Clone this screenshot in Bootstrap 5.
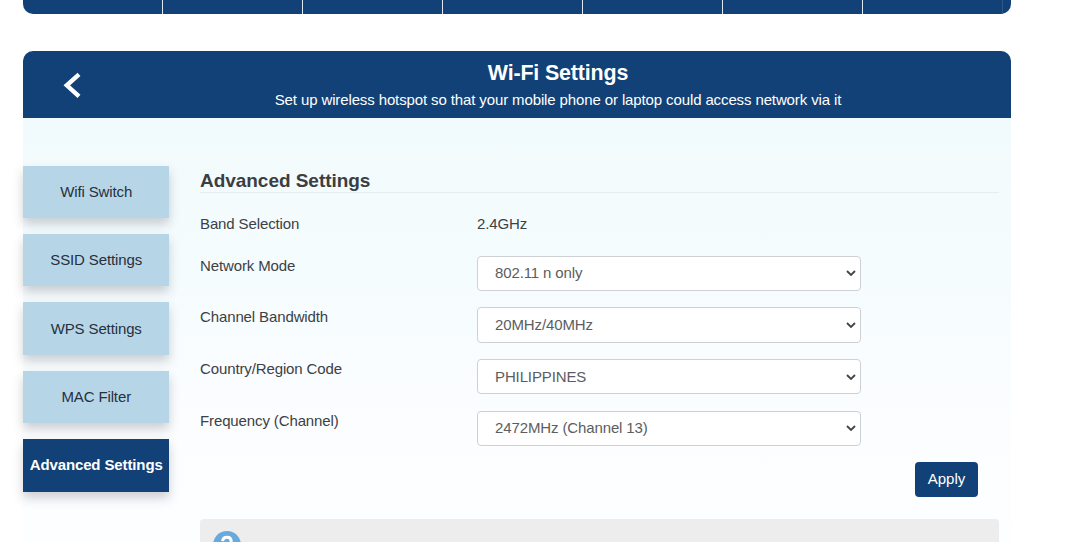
<!DOCTYPE html>
<html lang="en">
<head>
<meta charset="utf-8">
<meta name="viewport" content="width=device-width, initial-scale=1">
<title>Wi-Fi Settings</title>
<link href="https://cdn.jsdelivr.net/npm/bootstrap@5.3.0/dist/css/bootstrap.min.css" rel="stylesheet">
<style>
  :root { --navy: #114176; --sky: #b6d6e8; }
  body { font-family: "Liberation Sans", Arial, sans-serif; font-size: 15px; line-height: 20px; letter-spacing: -.12px; color: #3d4045; background: #fff; }
  .page { width: 988px; margin-left: 23px; height: 542px; }
  .topnav { height: 13.6px; background: var(--navy); border-radius: 0 0 10px 10px; padding-right: 8px; }
  .topnav span { border-right: 1px solid #dfe9f2; }
  .topnav span:last-child { border-color: #2c588a; }
  .panel { margin-top: 37.9px; height: 490.5px; }
  .panel-head { height: 67px; background: var(--navy); border-radius: 10px 10px 0 0; padding: 8.6px 0 0 82px; }
  .panel-head h1 { font-size: 21.4px; line-height: 26px; letter-spacing: -.14px; }
  .panel-head p { line-height: 20px; margin-top: 4px; }
  .back { left: 40px; top: 21px; line-height: 0; }
  .panel-main { background: linear-gradient(#f1fafc 0, #f5fcfe 150px, #fbfdff 300px, #fdfeff 424px); height: 423.5px; padding-top: 47.1px; }
  .side { width: 146px; padding-left: .4px; gap: 16px; }
  .side a { height: 52.4px; background: var(--sky); color: #27303c; box-shadow: 0 6px 10px rgba(60,60,70,.24); text-decoration: none; }
  .side a.current { background: var(--navy); color: #fff; font-weight: 700; }
  .content { margin-left: 31px; width: 799px; height: 376.4px; }
  .content h2 { height: 27.3px; padding-top: 1px; font-size: 19px; line-height: 27px; letter-spacing: -.04px; color: #3c3e42; border-bottom: 1px solid #e4edf0; }
  .form-line { height: 51.6px; }
  .form-line label { width: 277px; }
  .form-line.first { height: 62.9px; padding-top: 21.3px; }
  .form-line .form-select { width: 384.2px; height: 35.4px; font: inherit; letter-spacing: inherit; line-height: 20px; padding: 0 30px 0 17px; color: #5b5d61; border: 1px solid #cdd1d3; border-radius: 4px; background-color: #fff;
    background-image: url("data:image/svg+xml,%3Csvg xmlns='http://www.w3.org/2000/svg' viewBox='0 0 10 6'%3E%3Cpath d='M1 1l4 4 4-4' fill='none' stroke='%23444' stroke-width='1.8'/%3E%3C/svg%3E");
    background-size: 10px 6px; background-position: right 4px center; }
  .apply { width: 63px; height: 35px; background: var(--navy); color: #fff; border: 0; border-radius: 4px; font-size: 15px; line-height: 20px; padding: 0 0 2px; margin-right: 21px; letter-spacing: -.05px; }
  .help { height: 23px; background: #ededed; border-radius: 4px 4px 0 0; padding: 12px 13px 0; margin-top: 21.5px; }
</style>
</head>
<body class="overflow-hidden">
<div class="page">
  <nav class="topnav d-flex">
    <span class="flex-fill"></span><span class="flex-fill"></span><span class="flex-fill"></span><span class="flex-fill"></span><span class="flex-fill"></span><span class="flex-fill"></span><span class="flex-fill"></span>
  </nav>
  <section class="panel">
    <header class="panel-head position-relative text-center text-white">
      <a href="#" class="back position-absolute" aria-label="Back"><svg width="18" height="27" viewBox="0 0 18 27"><path d="M16 2.4 3.8 13.3 16 24.4" fill="none" stroke="#fff" stroke-width="4.4"/></svg></a>
      <h1 class="fw-bold mb-0">Wi-Fi Settings</h1>
      <p class="mb-0">Set up wireless hotspot so that your mobile phone or laptop could access network via it</p>
    </header>
    <div class="panel-main d-flex align-items-start">
      <nav class="side d-flex flex-column">
        <a href="#" class="d-flex align-items-center justify-content-center">Wifi Switch</a>
        <a href="#" class="d-flex align-items-center justify-content-center">SSID Settings</a>
        <a href="#" class="d-flex align-items-center justify-content-center">WPS Settings</a>
        <a href="#" class="d-flex align-items-center justify-content-center">MAC Filter</a>
        <a href="#" class="current d-flex align-items-center justify-content-center text-nowrap">Advanced Settings</a>
      </nav>
      <main class="content overflow-hidden">
        <h2 class="fw-bold mb-0">Advanced Settings</h2>
        <div class="form-line first d-flex"><label>Band Selection</label><span>2.4GHz</span></div>
        <div class="form-line d-flex"><label for="mode">Network Mode</label><select id="mode" class="form-select"><option>802.11 n only</option></select></div>
        <div class="form-line d-flex"><label for="width">Channel Bandwidth</label><select id="width" class="form-select"><option>20MHz/40MHz</option></select></div>
        <div class="form-line d-flex"><label for="region">Country/Region Code</label><select id="region" class="form-select"><option>PHILIPPINES</option></select></div>
        <div class="form-line d-flex"><label for="freq">Frequency (Channel)</label><select id="freq" class="form-select"><option>2472MHz (Channel 13)</option></select></div>
        <div class="d-flex justify-content-end"><button class="btn apply">Apply</button></div>
        <div class="help overflow-hidden"><svg width="28" height="28" viewBox="0 0 28 28"><circle cx="14" cy="14" r="14" fill="#6aa9dc"/><path d="M9.6 10.2Q10 6.2 14 6.2t4.2 3.9q0 2-2 3.4T14 17" fill="none" stroke="#fff" stroke-width="3"/><circle cx="14" cy="21" r="1.9" fill="#fff"/></svg></div>
      </main>
    </div>
  </section>
</div>
<script src="https://cdn.jsdelivr.net/npm/bootstrap@5.3.0/dist/js/bootstrap.bundle.min.js"></script>
</body>
</html>
